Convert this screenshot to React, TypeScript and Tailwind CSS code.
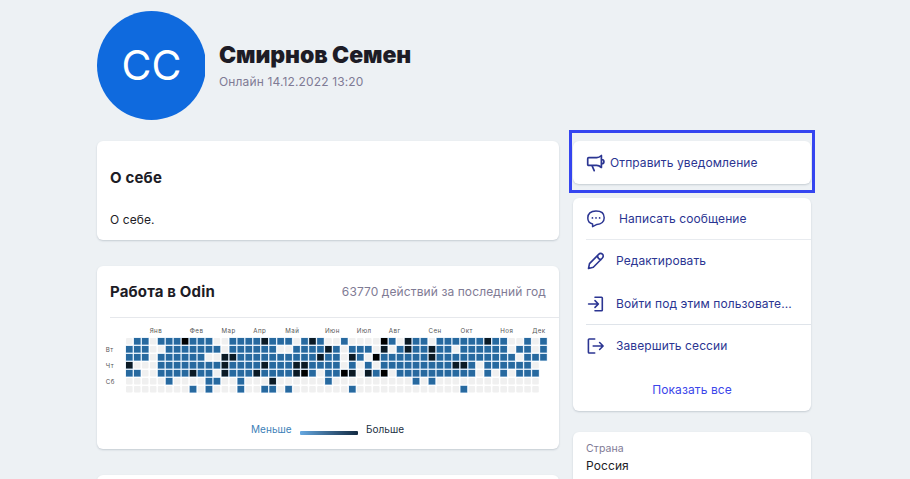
import React from "react";

// "." no activity, "b" usual, "k" high, "x" peak
const ROWS = [
  ".bb.bbbxbbb..bbbbkbbb.bkb..b....xb.kbb.bbbbbbkbb..b.b",
  "bbb..bbbbbbb.bbbbbb..bbbbkb.bbb.k.bkbbkbb.bbbbbb.bb.b",
  "bbb.bbbbbb..kkbbbbbbbbbbkbb.kb.xbbbbbbkbbbbbbbbbb.bbb",
  "k...bbbbbbbbkbbbbkbbbkkbbbb.b.b.bbbbbbbbbkkb.bbbbbb.",
  "bb..bbbbkbb.kbbbkbbbbkxb.bbxk.kbx.bbbbbbbbbb.b.b.bbb",
  ".....b....bb..b...k......b..........b.b.............",
  "........b.b...b..bb.b.......b.............b.........",
];
const COLORS: Record<string, string> = { ".": "#f0f0f0", b: "#27699f", k: "#0b1a25", x: "#000000" };
const MONTHS: [string, number][] = [
  ["Янв", 149.7], ["Фев", 189.8], ["Мар", 221.5], ["Апр", 253.3], ["Май", 285.2], ["Июн", 325],
  ["Июл", 356.8], ["Авг", 388.8], ["Сен", 428.6], ["Окт", 460.5], ["Ноя", 500.2], ["Дек", 532.2],
];
const DAYS: [string, number][] = [["Вт", 352], ["Чт", 368], ["Сб", 384]];

function Heatmap() {
  return (
    <svg className="block" width="462" height="82" viewBox="97 318 462 82">
      <g fill="#555555" fontSize="6.2" letterSpacing="0.45">
        {MONTHS.map(([m, x]) => <text key={m} x={x} y="333">{m}</text>)}
        {DAYS.map(([d, y]) => <text key={d} x="105.8" y={y}>{d}</text>)}
      </g>
      {ROWS.map((row, r) =>
        row.split("").map((c, i) => {
          const x = 126 + i * 7.965;
          const y = 338 + r * 7.98;
          return (
            <g key={`${r}-${i}`}>
              {c !== "." && <rect x={x - 0.4} y={y - 0.4} width="7.5" height="7.5" fill="#cfe3f6" />}
              <rect x={x} y={y} width="6.6" height="6.6" rx={c === "." ? 1 : 0} fill={COLORS[c]} />
            </g>
          );
        })
      )}
    </svg>
  );
}

const ico = { width: 20, height: 20, viewBox: "0 0 20 20", fill: "none", stroke: "currentColor", strokeWidth: 1.5, strokeLinecap: "round", strokeLinejoin: "round", className: "shrink-0 block" } as const;

const Megaphone = () => (
  <svg {...ico} strokeWidth={1.7}>
    <path d="M2.7 4.7h8c2 0 3.3-.9 4.7-2.2v12c-1.4-1.2-2.7-2.1-4.7-2.1h-8c-.6 0-1-.4-1-1V5.7c0-.6.4-1 1-1zM6 12.6l2.2 5M15.6 6.5c3.1.2 3.1 4.1 0 4.2" />
  </svg>
);
const Chat = () => (
  <svg {...ico}>
    <path d="M6.6 14.9C3.6 14.2 1.8 12 1.8 8.9c0-4.2 2.8-6.8 8.2-6.8s8.2 2.8 8.2 6.7-2.9 6.5-7.3 6.6l-4.3 2.3z" />
    <path d="M6.4 8.9h.05M10 8.9h.05M13.6 8.9h.05" strokeWidth="1.7" />
  </svg>
);
const Pencil = () => (
  <svg {...ico} strokeWidth={1.6}>
    <path d="M2.5 17.5l1-4.9 8.9-9c1.4-1.4 2.8-1.5 4-.4s1.1 2.7-.2 4l-8.9 9zM11.4 4.9c.3 2.2 1.4 3.4 3.6 3.7" />
  </svg>
);
const SignIn = () => (
  <svg {...ico} strokeWidth={1.6}>
    <path d="M9 3.2h6.5c.5 0 .8.3.8.8v12c0 .5-.3.8-.8.8H9M2.6 10h9.4M9 6.6l3.4 3.4L9 13.4" />
  </svg>
);
const SignOut = () => (
  <svg {...ico} strokeWidth={1.6}>
    <path d="M8.7 3H3.2c-.5 0-.8.3-.8.8v12.4c0 .5.3.8.8.8h5.5M7.2 10H17M13.6 6.5l3.5 3.5-3.5 3.5" />
  </svg>
);

const card = "rounded-md bg-white shadow-[0_1px_2px_rgba(40,60,80,0.2)]";

export default function App() {
  return (
    <div className="h-[479px] w-[910px] overflow-hidden bg-[#edf1f4] pl-[97px] font-['Inter','Liberation_Sans',sans-serif] text-[#1d1c26]">
      <header className="flex h-[141px] pt-[11px]">
        <div className="h-[109px] w-[108px] overflow-hidden">
          <div className="flex h-[109px] w-[109px] items-center justify-center rounded-full bg-[#0f6ade] text-[41px] leading-none text-white">
            <span>СС</span>
          </div>
        </div>
        <div className="ml-[14px] pt-[28px]">
          <h1 className="text-[23px] font-black leading-[32px] tracking-[-0.1px]">Смирнов Семен</h1>
          <p className="mt-[3px] text-[12px] leading-[16px] tracking-[0.14px] text-[#7f7b95]">Онлайн 14.12.2022 13:20</p>
        </div>
      </header>
      <div className="flex items-start gap-[10px]">
        <main className="flex w-[462px] flex-col gap-[26px]">
          <section className={`${card} h-[99px] pl-[13px]`}>
            <h2 className="pt-[27px] text-[15px] font-bold leading-[20px] tracking-[0.18px]">О себе</h2>
            <p className="mt-[24px] text-[12px] leading-[16px] tracking-[0.1px]">О себе.</p>
          </section>
          <section className={`${card} h-[183px]`}>
            <div className="ml-[13px] flex h-[52px] items-center justify-between border-b border-[#e6e8ec] pr-[13px]">
              <h2 className="pt-[2px] text-[15px] font-bold tracking-[0.15px]">Работа в Odin</h2>
              <span className="text-[12px] tracking-[0.1px] text-[#7f7b95]">63770 действий за последний год</span>
            </div>
            <Heatmap />
            <div className="ml-[154px] mt-[21px] flex h-[16px] items-center text-[10px] tracking-[0.04px]">
              <span className="w-[49px] text-[#3c7fb8]">Меньше</span>
              <i className="mt-[8px] h-[4px] w-[58px] rounded-[1px] bg-linear-to-r from-[#66a9e2] to-[#132b43]" />
              <span className="ml-[8px] text-[#1b2f43]">Больше</span>
            </div>
          </section>
          <section className={`${card} h-[40px]`} />
        </main>
        <aside className="-mt-[11px] w-[246px] text-[12px] tracking-[0.1px] text-[#2b3592]">
          <div className="h-[63px] border-[3px] border-[#3545f0] pt-[8px] pl-px">
            <div className={`${card} flex h-[43px] w-[238px] items-center gap-[4px] pl-[13px]`}>
              <Megaphone /><span>Отправить уведомление</span>
            </div>
          </div>
          <nav className={`${card} ml-[4px] mt-[5px] h-[213px] w-[238px]`}>
            <div className="ml-[13px] flex h-[42px] items-center gap-[13px] border-b border-[#e8ebef]">
              <Chat /><span>Написать сообщение</span>
            </div>
            <div className="ml-[13px] flex h-[43px] items-center gap-[10px] pb-[2px]">
              <Pencil /><span>Редактировать</span>
            </div>
            <div className="ml-[13px] flex h-[42px] items-center gap-[10px] border-b border-[#dfe4ea]">
              <SignIn /><span>Войти под этим пользовате...</span>
            </div>
            <div className="ml-[13px] flex h-[43px] items-center gap-[10px] pb-[2px]">
              <SignOut /><span>Завершить сессии</span>
            </div>
            <div className="flex h-[43px] items-center justify-center text-[#3b46ea]"><span>Показать все</span></div>
          </nav>
          <section className={`${card} ml-[4px] mt-[21px] h-[80px] w-[238px] pl-[13px] pt-[9px] text-[#1d1c26]`}>
            <p className="text-[10.5px] leading-[15px] text-[#7f7b95]">Страна</p>
            <p className="mt-[2px] leading-[16px]">Россия</p>
          </section>
        </aside>
      </div>
    </div>
  );
}
